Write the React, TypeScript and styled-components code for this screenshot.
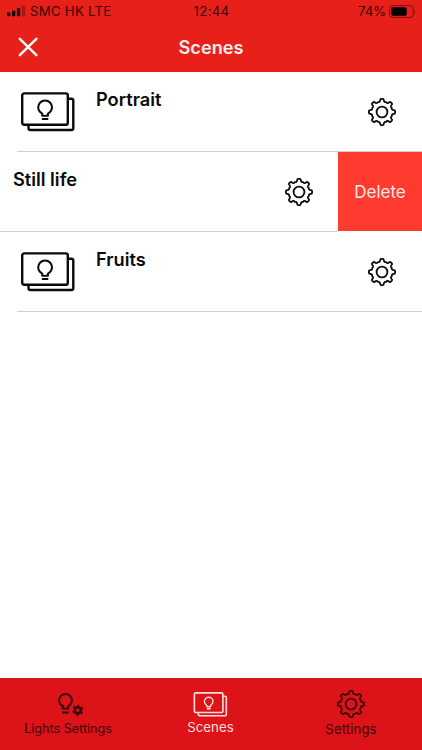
import React from "react";
import styled, { createGlobalStyle } from "styled-components";

const Global = createGlobalStyle`
  * { box-sizing: border-box; }
  html, body { margin: 0; background: #fff; overflow: hidden; }
  body { font-family: Inter, "Liberation Sans", sans-serif; color: #0b0b0b; }
  svg { display: block; flex: none; }
`;

const Screen = styled.div`
  width: 422px;
  height: 750px;
  display: flex;
  flex-direction: column;
  background: #fff;
`;

const Header = styled.header`
  height: 72px;
  background: #e7211a;
`;

const StatusBar = styled.div`
  height: 22px;
  display: grid;
  grid-template-columns: 1fr auto 1fr;
  align-items: center;
  padding: 0 6px 0 7px;
  color: #3a0604;
  font-size: 13.3px;
  line-height: 20px;
`;

const StatusGroup = styled.div<{ $end?: boolean }>`
  display: flex;
  align-items: center;
  justify-content: ${(p) => (p.$end ? "flex-end" : "flex-start")};
  gap: ${(p) => (p.$end ? 3 : 4)}px;
  letter-spacing: ${(p) => (p.$end ? -0.15 : 0.2)}px;
  white-space: nowrap;
`;

const Clock = styled.span`
  letter-spacing: 0.25px;
`;

const NavBar = styled.div`
  height: 50px;
  display: grid;
  grid-template-columns: 56px 1fr 56px;
  align-items: center;
`;

const CloseButton = styled.button`
  border: 0;
  background: none;
  padding: 0 0 0 17px;
`;

const Title = styled.h1`
  margin: 0;
  text-align: center;
  color: #ffeceb;
  font-size: 18.2px;
  font-weight: 600;
  line-height: 50px;
`;

const List = styled.main`
  flex: 1;
`;

const Row = styled.div`
  height: 80px;
  display: flex;
`;

const RowBody = styled.div<{ $swiped?: boolean }>`
  flex: 1;
  display: flex;
  margin-left: ${(p) => (p.$swiped ? 0 : 17)}px;
  padding: 0 ${(p) => (p.$swiped ? 24 : 25)}px 0 ${(p) => (p.$swiped ? 13 : 3)}px;
  border-bottom: 1px solid #d0d0d0;
`;

const Thumb = styled.div`
  width: 76px;
  padding-top: 19px;
`;

const Name = styled.div`
  flex: 1;
  padding-top: 16px;
  font-size: 18.2px;
  line-height: 22px;
  font-weight: 600;
  white-space: nowrap;
`;

const GearButton = styled.button`
  border: 0;
  padding: 0;
  background: none;
  color: #0b0b0b;
  display: flex;
  align-items: center;
`;

const DeleteButton = styled.button`
  width: 84px;
  height: 79px;
  border: 0;
  padding: 0;
  background: #ff3b2f;
  color: #ffe9e6;
  font: 400 17px/22px Inter, "Liberation Sans", sans-serif;
`;

const TabBar = styled.nav`
  height: 72px;
  display: flex;
  background: #dc1318;
`;

const Tab = styled.div<{ $active?: boolean; $w: number; $top: number; $gap: number }>`
  width: ${(p) => p.$w}px;
  padding-top: ${(p) => p.$top}px;
  display: flex;
  flex-direction: column;
  align-items: center;
  gap: ${(p) => p.$gap}px;
  color: ${(p) => (p.$active ? "#ffdcdc" : "#3c0506")};
  line-height: 16px;
  white-space: nowrap;
`;

const TabLabel = styled.span<{ $spacing: number; $size: number }>`
  letter-spacing: ${(p) => p.$spacing}px;
  font-size: ${(p) => p.$size}px;
`;

function gearPath(): string {
  const pt = (r: number, deg: number) => {
    const a = ((deg - 90) * Math.PI) / 180;
    return `${(15 + r * Math.cos(a)).toFixed(2)} ${(15 + r * Math.sin(a)).toFixed(2)}`;
  };
  let d = `M${pt(13.1, -4)}`;
  for (let i = 0; i < 8; i++) {
    const t = i * 45;
    d += `L${pt(13.1, t + 4)}`;
    d += `Q${pt(13.1, t + 7.5)} ${pt(12.1, t + 8.5)}`;
    d += `C${pt(11.3, t + 9)} ${pt(10.6, t + 12)} ${pt(10.3, t + 15.5)}`;
    d += `Q${pt(10.2, t + 18)} ${pt(10.7, t + 22.5)}`;
    d += `Q${pt(10.2, t + 27)} ${pt(10.3, t + 29.5)}`;
    d += `C${pt(10.6, t + 33)} ${pt(11.3, t + 36)} ${pt(12.1, t + 36.5)}`;
    d += `Q${pt(13.1, t + 37.5)} ${pt(13.1, t + 41)}`;
  }
  return d + "Z";
}

const GEAR = gearPath();

const GearIcon = () => (
  <svg width="30" height="30" viewBox="0 0 30 30" fill="none" stroke="currentColor" strokeWidth="1.8" strokeLinejoin="round">
    <path d={GEAR} />
    <circle cx="15" cy="15" r="5.4" />
  </svg>
);

const SceneIcon = ({ width, height, stroke }: { width: number; height: number; stroke: number }) => (
  <svg width={width} height={height} viewBox="0 0 56 42" fill="none" stroke="currentColor" strokeWidth={stroke} strokeLinejoin="round" strokeLinecap="round">
    <rect x="2.2" y="2.4" width="45.6" height="31.4" rx="2" />
    <path d="M48 7.8H51.3Q53.3 7.8 53.3 9.8V37Q53.3 39 51.3 39H10.5Q8.5 39 8.5 37V34.3" />
    <path strokeWidth={stroke * 0.85} strokeLinecap="butt" d="M22.2 24.7V22.6C19.5 21 18.2 18.9 18.2 16.3A6.9 6.9 0 0 1 32 16.3C32 18.9 30.7 21 28 22.6V24.7ZM21.9 27.9H28.3" />
  </svg>
);

const LightsIcon = () => (
  <svg width="28" height="24" viewBox="0 0 28 24" fill="none" stroke="currentColor" strokeWidth="2">
    <path d="M5.8 16.6V14.2C3.7 13 2.1 11 2.1 8.3A6.4 6.4 0 0 1 14.9 8.3C14.9 11 13.3 13 11.2 14.2V16.6ZM5.3 20.6H11.7" />
    <circle cx="20.8" cy="18.3" r="3" strokeWidth="2.6" />
    <circle cx="20.8" cy="18.3" r="4.7" strokeWidth="1.7" strokeDasharray="2.45 2.47" strokeDashoffset="1.2" transform="rotate(-90 20.8 18.3)" />
  </svg>
);

const LightsIconSlot = styled.div`
  padding-left: 5px;
`;

const SignalIcon = () => (
  <svg width="19" height="12" viewBox="0 0 19 12" fill="#160202">
    <rect x="0" y="7.5" width="3.3" height="3.8" rx="0.7" />
    <rect x="5" y="5.8" width="3.3" height="5.5" rx="0.7" />
    <rect x="9.9" y="3" width="3.3" height="8.3" rx="0.7" />
    <rect x="14.9" y="0.2" width="3.3" height="11.1" rx="0.7" opacity="0.3" />
  </svg>
);

const BatteryIcon = () => (
  <svg width="27" height="13" viewBox="0 0 27 13" fill="none">
    <rect x="0.6" y="0.6" width="23.6" height="11.8" rx="3" stroke="#7c100d" strokeWidth="1" />
    <rect x="2.3" y="2.3" width="15.4" height="8.4" rx="1.6" fill="#050000" />
    <path d="M25.4 4.5Q27 6.5 25.4 8.5Z" fill="#7c100d" />
  </svg>
);

const CloseIcon = () => (
  <svg width="22" height="22" viewBox="0 0 22 22" stroke="#fff" strokeWidth="2.4" strokeLinecap="round">
    <path d="M2.8 2.8L19.4 19.2M19.4 2.8L2.8 19.2" />
  </svg>
);

const scenes = [
  { name: "Portrait", swiped: false },
  { name: "Still life", swiped: true },
  { name: "Fruits", swiped: false },
];

export default function App() {
  return (
    <>
      <Global />
      <Screen>
        <Header>
          <StatusBar>
            <StatusGroup>
              <SignalIcon />
              <span>SMC HK LTE</span>
            </StatusGroup>
            <Clock>12:44</Clock>
            <StatusGroup $end>
              <span>74%</span>
              <BatteryIcon />
            </StatusGroup>
          </StatusBar>
          <NavBar>
            <CloseButton aria-label="Close">
              <CloseIcon />
            </CloseButton>
            <Title>Scenes</Title>
          </NavBar>
        </Header>
        <List>
          {scenes.map((s) => (
            <Row key={s.name}>
              <RowBody $swiped={s.swiped}>
                {!s.swiped && (
                  <Thumb>
                    <SceneIcon width={56} height={42} stroke={2.4} />
                  </Thumb>
                )}
                <Name>{s.name}</Name>
                <GearButton aria-label="Edit scene">
                  <GearIcon />
                </GearButton>
              </RowBody>
              {s.swiped && <DeleteButton>Delete</DeleteButton>}
            </Row>
          ))}
        </List>
        <TabBar>
          <Tab $w={136} $top={14} $gap={5}>
            <LightsIconSlot>
              <LightsIcon />
            </LightsIconSlot>
            <TabLabel $size={12.6} $spacing={0}>Lights Settings</TabLabel>
          </Tab>
          <Tab $w={149} $top={13} $gap={1} $active>
            <SceneIcon width={35} height={27} stroke={2.6} />
            <TabLabel $size={13.3} $spacing={0}>Scenes</TabLabel>
          </Tab>
          <Tab $w={132} $top={11} $gap={2}>
            <GearIcon />
            <TabLabel $size={13.2} $spacing={0.1}>Settings</TabLabel>
          </Tab>
        </TabBar>
      </Screen>
    </>
  );
}
